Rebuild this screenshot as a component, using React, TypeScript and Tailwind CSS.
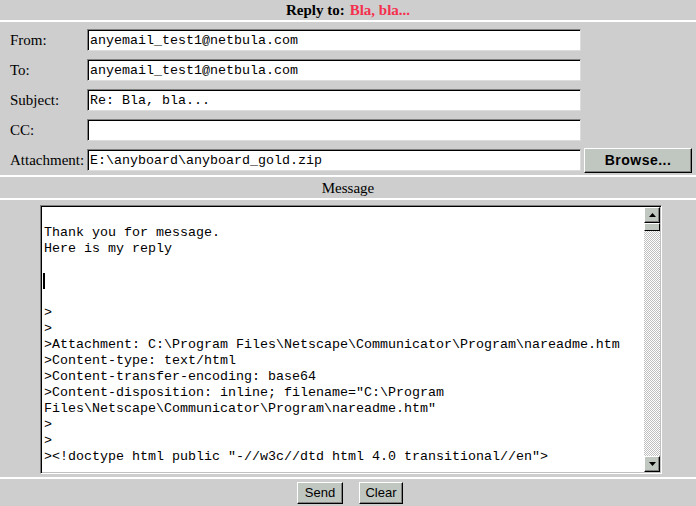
const mono = "font-['Liberation_Mono','Courier_New',monospace]";

const fields: { label: string; value: string }[] = [
  { label: "From:", value: "anyemail_test1@netbula.com" },
  { label: "To:", value: "anyemail_test1@netbula.com" },
  { label: "Subject:", value: "Re: Bla, bla..." },
  { label: "CC:", value: "" },
];

const bodyLines = [
  "",
  "Thank you for message.",
  "Here is my reply",
  "",
  "|CURSOR|",
  "",
  ">",
  ">",
  ">Attachment: C:\\Program Files\\Netscape\\Communicator\\Program\\nareadme.htm",
  ">Content-type: text/html",
  ">Content-transfer-encoding: base64",
  '>Content-disposition: inline; filename="C:\\Program',
  'Files\\Netscape\\Communicator\\Program\\nareadme.htm"',
  ">",
  ">",
  '><!doctype html public "-//w3c//dtd html 4.0 transitional//en">',
];

function TextBox({ value, width }: { value: string; width: string }) {
  return (
    <div
      className={`${width} h-[22px] bg-white border border-t-[#808080] border-l-[#808080] border-b-[#dcdcdc] border-r-[#dcdcdc] shadow-[inset_1px_1px_0_#000] flex items-center pl-[2px] pt-[1px] ${mono} text-[13.33px] whitespace-pre`}
    >
      {value}
    </div>
  );
}

function Button({ label, className }: { label: string; className: string }) {
  return (
    <div
      className={`${className} bg-[#c0c7c0] border border-t-white border-l-white border-b-black border-r-black shadow-[inset_-1px_-1px_0_#808080] flex items-center justify-center font-['Liberation_Sans',Arial,sans-serif]`}
    >
      {label}
    </div>
  );
}

function ScrollArrow({ up }: { up: boolean }) {
  return (
    <div className="w-[16px] h-[16px] bg-[#c0c7c0] border border-t-white border-l-white border-b-black border-r-black shadow-[inset_-1px_-1px_0_#808080] flex items-center justify-center">
      <svg width="7" height="4" viewBox="0 0 7 4">
        {up ? <polygon points="3.5,0 7,4 0,4" fill="#000" /> : <polygon points="0,0 7,0 3.5,4" fill="#000" />}
      </svg>
    </div>
  );
}

export default function App() {
  return (
    <div className="w-[696px] h-[506px] bg-white flex flex-col gap-[2px] font-['Liberation_Serif','Times_New_Roman',serif] text-black overflow-hidden">
      {/* title bar */}
      <div className="h-[20px] shrink-0 bg-[#cecece] flex items-center justify-center pt-[1px] text-[15px] font-bold">
        <span>Reply to:</span>
        <span className="ml-[5px] text-[#f5304f]">Bla, bla...</span>
      </div>

      {/* header fields */}
      <div className="h-[153px] shrink-0 bg-[#cecece] flex flex-col gap-[8px] pt-[7px] pl-[10px] text-[15px]">
        {fields.map((f) => (
          <div key={f.label} className="h-[22px] flex items-center">
            <div className="w-[77px]">{f.label}</div>
            <TextBox value={f.value} width="w-[494px]" />
          </div>
        ))}
        <div className="h-[22px] flex items-center">
          <div className="w-[77px] whitespace-nowrap">Attachment:</div>
          <TextBox value={"E:\\anyboard\\anyboard_gold.zip"} width="w-[494px]" />
          <Button label="Browse..." className="ml-[3px] w-[108px] h-[25px] shrink-0 text-[14px] font-bold tracking-[0.5px]" />
        </div>
      </div>

      {/* message caption */}
      <div className="h-[21px] shrink-0 bg-[#cecece] flex items-center justify-center pt-[2px] text-[15px]">Message</div>

      {/* message body */}
      <div className="h-[277px] shrink-0 bg-[#cecece] pl-[40px] pt-[5px]">
        <div className="w-[622px] h-[269px] bg-white border border-t-[#808080] border-l-[#808080] border-b-white border-r-white shadow-[inset_1px_1px_0_#000,inset_-1px_-1px_0_#c0c0c0] flex p-[1px]">
          <div className={`flex-1 pl-[2px] pt-[2px] ${mono} text-[13.33px] leading-[16px] whitespace-pre overflow-hidden`}>
            {bodyLines.map((line, i) =>
              line === "|CURSOR|" ? (
                <div key={i} className="h-[16px] flex items-center">
                  <div className="w-[2px] h-[16px] bg-black -ml-[1px]" />
                </div>
              ) : (
                <div key={i} className="h-[16px]">
                  {line}
                </div>
              )
            )}
          </div>
          <div className="w-[16px] flex flex-col bg-[repeating-conic-gradient(#c0c0c0_0_25%,#ffffff_0_50%)] bg-[length:2px_2px]">
            <ScrollArrow up />
            <div className="w-[16px] h-[8px] bg-[#c0c7c0] border border-t-white border-l-white border-b-black border-r-black" />
            <div className="flex-1" />
            <ScrollArrow up={false} />
          </div>
        </div>
      </div>

      {/* actions */}
      <div className="flex-1 bg-[#cecece] flex items-center justify-center gap-[16px] pl-[4px] text-[13px]">
        <Button label="Send" className="w-[46px] h-[22px]" />
        <Button label="Clear" className="w-[44px] h-[22px]" />
      </div>
    </div>
  );
}
